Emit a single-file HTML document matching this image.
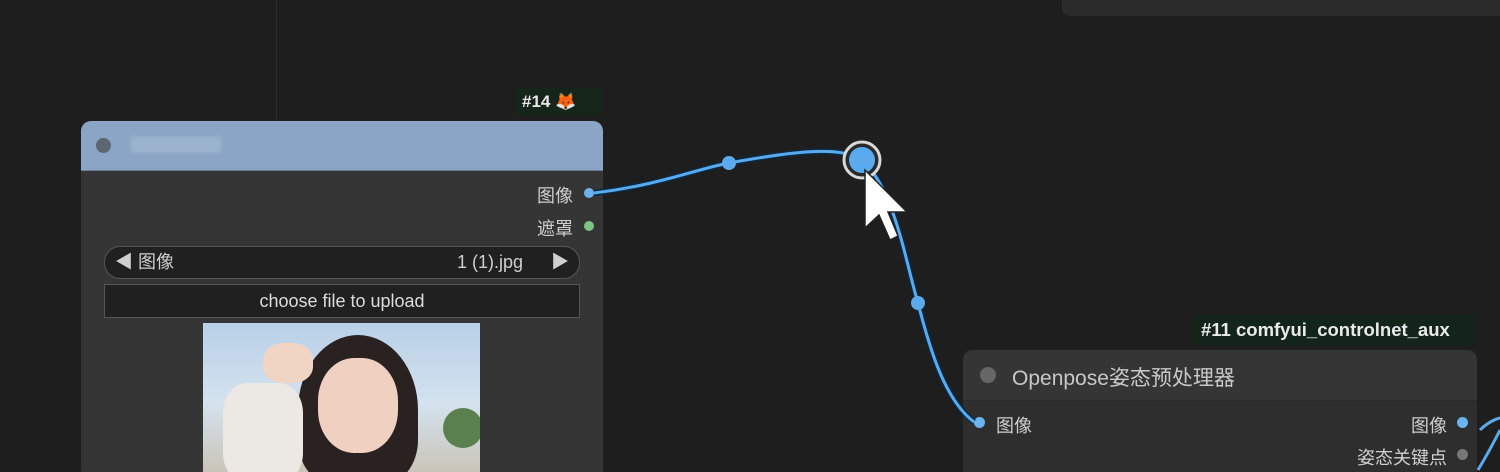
<!DOCTYPE html>
<html><head><meta charset="utf-8"><style>
html,body{margin:0;width:1500px;height:472px;overflow:hidden;}
body{background:#1e1e1f;position:relative;font-family:"Liberation Sans","Noto Sans CJK SC",sans-serif;}
.abs{position:absolute}
</style></head><body>
<div class="abs" style="left:1062px;top:-10px;width:460px;height:26px;background:#2b2b2c;border-radius:8px;"></div>
<div class="abs" style="left:276px;top:0;width:1px;height:120px;background:#2a2d3a"></div>
<div class="abs" style="left:515px;top:88px;width:88px;height:27px;background:#15251a;border-radius:3px;color:#e8e8e8;font-weight:bold;font-size:17px;line-height:27px;padding-left:7px;box-sizing:border-box">#14 <span style="color:#f0a050">🦊</span></div>
<div class="abs" style="left:81px;top:121px;width:522px;height:360px;background:#353535;border-radius:10px;overflow:hidden">
 <div style="height:49px;background:#8aa5c5;border-bottom:1px solid #6a7f99;position:relative">
  <div class="abs" style="left:15px;top:17px;width:15px;height:15px;border-radius:50%;background:#5e6670"></div>
  <div class="abs" style="left:50px;top:16px;width:90px;height:16px;background:#9cb3cf;filter:blur(2px)"></div>
 </div>
 <div class="abs" style="right:30px;top:61px;color:#cfcfcf;font-size:18px">图像</div>
 <div class="abs" style="right:9px;top:67px;width:10px;height:10px;border-radius:50%;background:#6cb4f0"></div>
 <div class="abs" style="right:30px;top:94px;color:#cfcfcf;font-size:18px">遮罩</div>
 <div class="abs" style="right:9px;top:100px;width:10px;height:10px;border-radius:50%;background:#7cc486"></div>
 <div class="abs" style="left:23px;top:125px;width:474px;height:31px;background:#202020;border:1px solid #555;border-radius:16px;color:#cfcfcf;font-size:18px;line-height:31px">
  <span style="position:absolute;left:10px">◀ 图像</span><span style="position:absolute;right:56px">1 (1).jpg</span><span style="position:absolute;right:10px">▶</span></div>
 <div class="abs" style="left:23px;top:163px;width:474px;height:32px;background:#202020;border:1px solid #555;color:#dcdcdc;font-size:18px;line-height:32px;text-align:center">choose file to upload</div>
 <div class="abs" style="left:122px;top:202px;width:277px;height:160px;background:linear-gradient(180deg,#b8d0e8 0%,#d4e2ee 50%,#c8c0b0 100%);overflow:hidden">
  <div class="abs" style="left:95px;top:12px;width:120px;height:150px;border-radius:50% 50% 30% 30%;background:#2a2220"></div>
  <div class="abs" style="left:115px;top:35px;width:80px;height:95px;border-radius:45%;background:#f0d0c0"></div>
  <div class="abs" style="left:20px;top:60px;width:80px;height:100px;background:#ece8e4;border-radius:30%"></div>
  <div class="abs" style="left:60px;top:20px;width:50px;height:40px;background:#f0d4c4;border-radius:40%"></div>
  <div class="abs" style="left:240px;top:85px;width:40px;height:40px;background:#5a8050;border-radius:50%"></div>
 </div>
</div>
<div class="abs" style="left:1193px;top:315px;width:282px;height:30px;background:#13241a;border-radius:3px;color:#eaeaea;font-weight:bold;font-size:18.5px;line-height:30px;padding-left:8px;box-sizing:border-box;white-space:nowrap">#11 comfyui_controlnet_aux</div>
<div class="abs" style="left:963px;top:350px;width:514px;height:140px;background:#2e2e2e;border-radius:10px;overflow:hidden">
 <div style="height:50px;background:#353535;border-bottom:1px solid #2a2a2a;position:relative">
  <div class="abs" style="left:17px;top:17px;width:16px;height:16px;border-radius:50%;background:#666"></div>
  <div class="abs" style="left:49px;top:12px;color:#c8c8c8;font-size:21px">Openpose姿态预处理器</div>
 </div>
 <div class="abs" style="left:11px;top:67px;width:11px;height:11px;border-radius:50%;background:#6cb4f0"></div>
 <div class="abs" style="left:33px;top:62px;color:#cfcfcf;font-size:18px">图像</div>
 <div class="abs" style="right:30px;top:62px;color:#cfcfcf;font-size:18px">图像</div>
 <div class="abs" style="right:9px;top:67px;width:11px;height:11px;border-radius:50%;background:#6cb4f0"></div>
 <div class="abs" style="right:30px;top:94px;color:#cfcfcf;font-size:18px">姿态关键点</div>
 <div class="abs" style="right:9px;top:99px;width:11px;height:11px;border-radius:50%;background:#777"></div>
</div>
<svg class="abs" style="left:0;top:0" width="1500" height="472">
 <path d="M594 193 C660 185 700 168 729 163 C790 152 840 145 862 160 C895 190 905 260 918 303 C930 350 945 400 974 422" fill="none" stroke="#0a2a44" stroke-width="6"/>
 <path d="M594 193 C660 185 700 168 729 163 C790 152 840 145 862 160 C895 190 905 260 918 303 C930 350 945 400 974 422" fill="none" stroke="#5aaaee" stroke-width="3"/>
 <path d="M1480 430 C1490 420 1500 418 1500 418 M1478 470 C1490 450 1495 440 1500 430" fill="none" stroke="#5aaaee" stroke-width="3"/>
 <circle cx="729" cy="163" r="7" fill="#5aaaee"/>
 <circle cx="918" cy="303" r="7" fill="#5aaaee"/>
 <circle cx="862" cy="160" r="18" fill="#2a2a2a" stroke="#d8d8d8" stroke-width="3"/>
 <circle cx="862" cy="160" r="13" fill="#5aaaee"/>
 <path d="M865 170 L865 228 L879 215 L890 240 L898 236 L888 212 L907 212 Z" fill="#fff" stroke="#222" stroke-width="1.5"/>
</svg>
</body></html>
